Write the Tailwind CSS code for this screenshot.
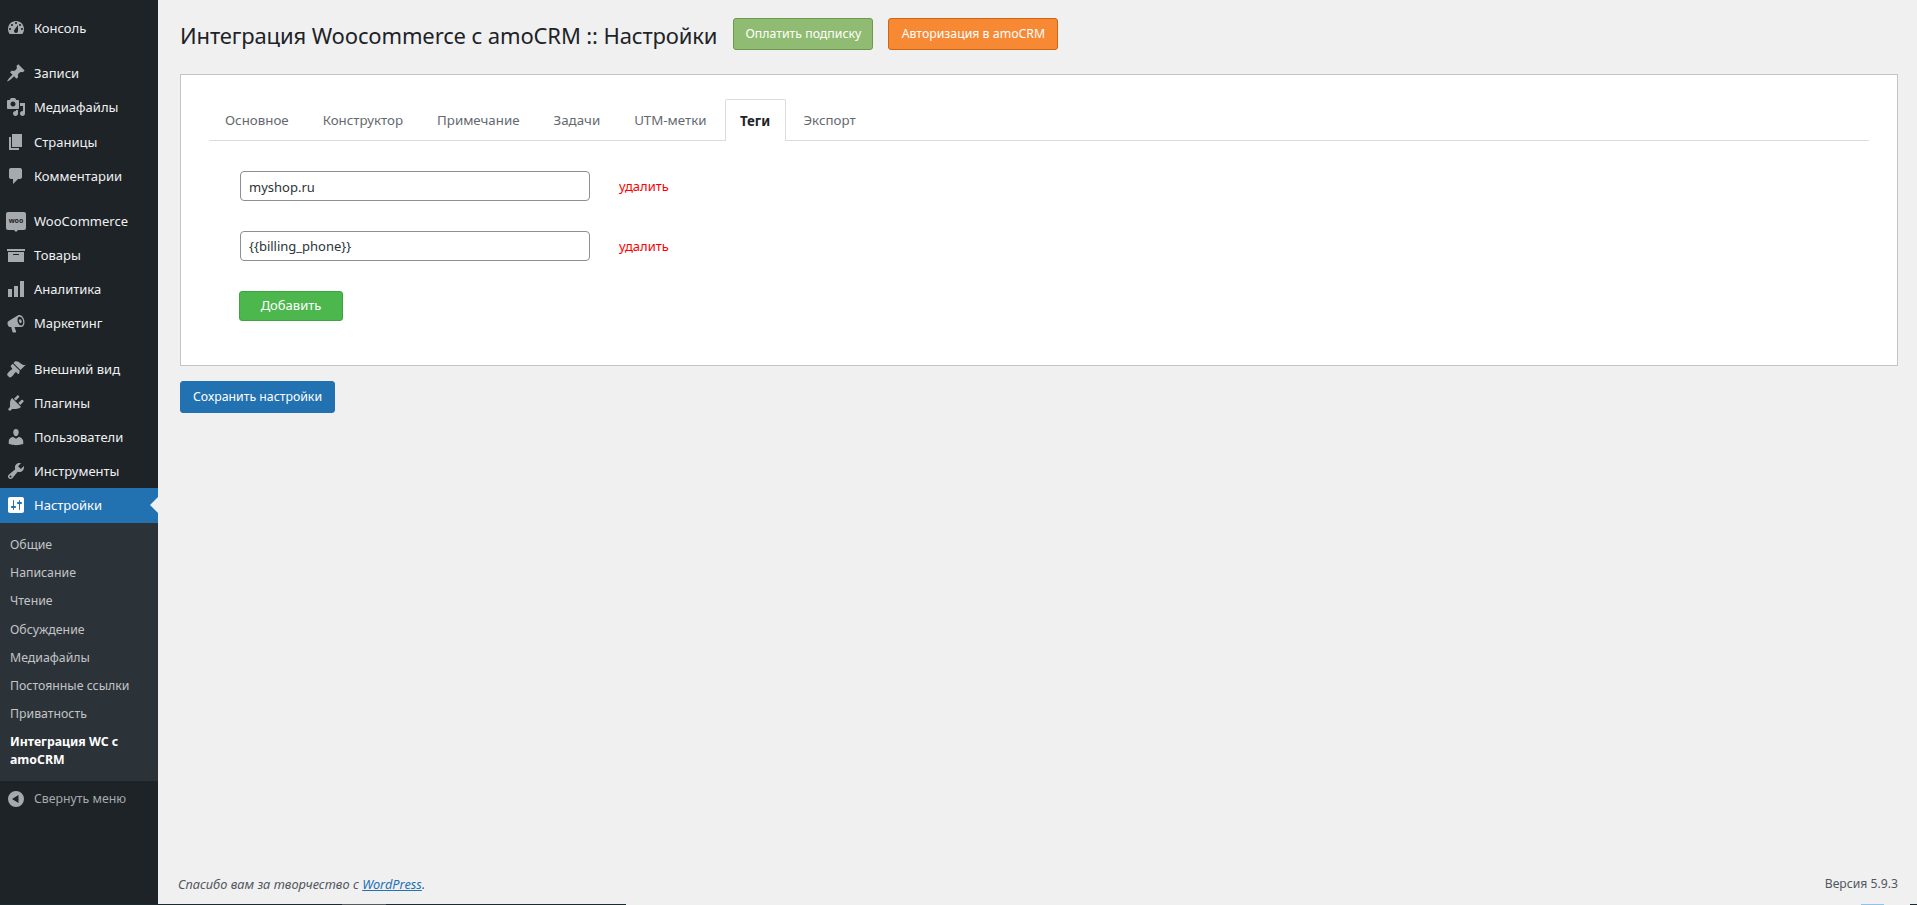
<!DOCTYPE html>
<html>
<head>
  <meta charset="UTF-8" />
  <title>Интеграция Woocommerce с amoCRM</title>
  <script src="https://cdn.jsdelivr.net/npm/@tailwindcss/browser@4"></script>
</head>
<body class="relative bg-[#f0f0f1] h-[905px] overflow-hidden flex font-['Noto_Sans',sans-serif] text-[13px] text-[#3c434a]">

  <!-- МЕНЮ -->
  <aside class="w-[158px] shrink-0 bg-[#1d2327] text-[#f0f0f1] pt-[11px] text-[13px] leading-[18.2px]">
    <a class="flex items-center h-[34.2px]"><svg class="w-5 h-5 ml-[6px] mr-[8px] fill-[#a7aaad]" viewBox="0 0 20 20"><path fill-rule="evenodd" d="M3.76 16h12.48c1.1-1.37 1.76-3.11 1.76-5 0-4.42-3.58-8-8-8s-8 3.58-8 8c0 1.89.66 3.63 1.76 5zM10 4c.55 0 1 .45 1 1s-.45 1-1 1-1-.45-1-1 .45-1 1-1zM6 6c.55 0 1 .45 1 1s-.45 1-1 1-1-.45-1-1 .45-1 1-1zm8 0c.55 0 1 .45 1 1s-.45 1-1 1-1-.45-1-1 .45-1 1-1zm-5.37 5.55L12 7v6c0 1.1-.9 2-2 2s-2-.9-2-2c0-.57.24-1.08.63-1.45zM4 10c.55 0 1 .45 1 1s-.45 1-1 1-1-.45-1-1 .45-1 1-1zm12 0c.55 0 1 .45 1 1s-.45 1-1 1-1-.45-1-1 .45-1 1-1z"/></svg>Консоль</a>

    <div class="h-[11px]"></div>
    <a class="flex items-center h-[34.2px]"><svg class="w-5 h-5 ml-[6px] mr-[8px] fill-[#a7aaad]" viewBox="0 0 20 20"><path d="M10.44 3.02l1.82-1.82 6.36 6.35-1.83 1.82c-1.05-.68-2.48-.57-3.41.36l-.75.75c-.92.93-1.04 2.35-.35 3.41l-1.83 1.82-2.41-2.41-2.8 2.79c-.42.42-3.38 2.71-3.8 2.29s1.86-3.39 2.28-3.81l2.79-2.79L4.1 9.36l1.83-1.82c1.05.69 2.48.57 3.4-.36l.75-.75c.93-.92 1.05-2.35.36-3.41z"/></svg>Записи</a>
    <a class="flex items-center h-[34.2px]"><svg class="w-5 h-5 ml-[6px] mr-[8px] fill-[#a7aaad]" viewBox="0 0 20 20"><path fill-rule="evenodd" d="M13 11V4c0-.55-.45-1-1-1h-1.67L9 1H5L3.67 3H2c-.55 0-1 .45-1 1v7c0 .55.45 1 1 1h10c.55 0 1-.45 1-1zM7 4.5c1.38 0 2.5 1.12 2.5 2.5S8.38 9.5 7 9.5 4.5 8.38 4.5 7 5.62 4.5 7 4.5zM14 6h5v10.5c0 1.38-1.12 2.5-2.5 2.5S14 17.88 14 16.5s1.12-2.5 2.5-2.5c.17 0 .34.02.5.05V9h-3V6zm-4 8.05V13h2v3.5c0 1.38-1.12 2.5-2.5 2.5S7 17.88 7 16.5 8.12 14 9.5 14c.17 0 .34.02.5.05z"/></svg>Медиафайлы</a>
    <a class="flex items-center h-[34.2px]"><svg class="w-5 h-5 ml-[6px] mr-[8px] fill-[#a7aaad]" viewBox="0 0 20 20"><path d="M6 15V2h10v13H6zm-1 1h8v2H3V5h2v11z"/></svg>Страницы</a>
    <a class="flex items-center h-[34.2px]"><svg class="w-5 h-5 ml-[6px] mr-[8px] fill-[#a7aaad]" viewBox="0 0 20 20"><path d="M5 2h9c1.1 0 2 .9 2 2v7c0 1.1-.9 2-2 2h-2l-5 5v-5H5c-1.1 0-2-.9-2-2V4c0-1.1.9-2 2-2z"/></svg>Комментарии</a>

    <div class="h-[11px]"></div>
    <a class="flex items-center h-[34.2px]"><span class="relative w-5 h-[18px] ml-[6px] mr-[8px] rounded-[2px] bg-[#a7aaad] text-[#1d2327] text-[7px] leading-[18px] text-center font-bold">woo<span class="absolute left-[8px] top-[18px] border-x-[2px] border-t-[2px] border-x-transparent border-t-[#a7aaad]"></span></span>WooCommerce</a>
    <a class="flex items-center h-[34.2px]"><svg class="w-5 h-5 ml-[6px] mr-[8px] fill-[#a7aaad]" viewBox="0 0 20 20"><path fill-rule="evenodd" d="M19 4v2H1V4h18zM2 7h16v10H2V7zm11 3V9H7v1h6z"/></svg>Товары</a>
    <a class="flex items-center h-[34.2px]"><svg class="w-5 h-5 ml-[6px] mr-[8px] fill-[#a7aaad]" viewBox="0 0 20 20"><path d="M18 18V2h-4v16h4zm-6 0V7H8v11h4zm-6 0v-8H2v8h4z"/></svg>Аналитика</a>
    <a class="flex items-center h-[34.2px]"><svg class="w-5 h-5 ml-[6px] mr-[8px] fill-[#a7aaad]" viewBox="0 0 20 20"><path fill-rule="evenodd" d="M18.15 5.94c.46 1.62.38 3.22-.02 4.48-.42 1.28-1.26 2.18-2.3 2.48-.6.2-1.2.1-1.8.1H8.5l1.6 4.6c.1.4-.2.8-.6.8H7.2c-.4 0-.6-.2-.7-.5L5.2 13H4.25c-.5.06-1.08-.18-1.54-.62s-.88-1.08-1.06-1.88c-.24-.8-.2-1.56-.02-2.2.18-.62.58-1.08 1.06-1.3l9-5.4c.3-.2.6-.4 1-.5 1.04-.3 2.24.1 3.22 1 .98.88 1.8 2.24 2.26 3.86zM15.5 11.4c1.5-.4 2.1-2.6 1.5-5-.6-2.4-2.3-4-3.8-3.6-1.5.4-2.1 2.6-1.5 5 .6 2.4 2.3 4 3.8 3.6zM14.9 9.1c.7-.2 1-1.2.7-2.3-.3-1.1-1.1-1.8-1.8-1.6-.7.2-1 1.2-.7 2.3.3 1.1 1.1 1.8 1.8 1.6z"/></svg>Маркетинг</a>

    <div class="h-[11px]"></div>
    <a class="flex items-center h-[34.2px]"><svg class="w-5 h-5 ml-[6px] mr-[8px] fill-[#a7aaad]" viewBox="0 0 20 20"><path d="M14.48 11.06L7.41 3.99l1.5-1.5c.5-.56 2.3-.47 3.51.32 1.21.8 1.43 1.28 2.91 2.1 1.18.64 2.45 1.26 4.45.85zm-.71.71L6.7 4.7 4.93 6.47c-.39.39-.39 1.02 0 1.41l1.06 1.06c.39.39.39 1.03 0 1.42-.6.6-1.43 1.11-2.21 1.69-.35.26-.7.53-1.01.84-1.34 1.34-2.1 2.7-1.4 3.4l1.9 1.9c.7.7 2.06-.06 3.4-1.4.31-.31.58-.66.84-1.01.58-.78 1.09-1.61 1.69-2.21.39-.39 1.02-.39 1.41 0l1.06 1.06c.39.39 1.02.39 1.41 0z"/></svg>Внешний вид</a>
    <a class="flex items-center h-[34.2px]"><svg class="w-5 h-5 ml-[6px] mr-[8px] fill-[#a7aaad]" viewBox="0 0 20 20"><path d="M13.11 4.36L9.87 7.6 8 5.73l3.24-3.24c.35-.34 1.05-.2 1.56.32.52.51.66 1.21.31 1.55zm-8 1.77l.91-1.12 9.01 9.01-1.19.84c-.71.71-2.63 1.16-3.82 1.16H6.14L4.9 17.26c-.59.59-1.54.59-2.12 0-.59-.58-.59-1.53 0-2.12l1.24-1.24v-3.88c0-1.13.4-3.19 1.09-3.89zm7.26 3.97l3.24-3.24c.34-.35 1.04-.21 1.55.31.52.51.66 1.21.31 1.55l-3.24 3.25z"/></svg>Плагины</a>
    <a class="flex items-center h-[34.2px]"><svg class="w-5 h-5 ml-[6px] mr-[8px] fill-[#a7aaad]" viewBox="0 0 20 20"><path d="M10 9.25c-2.27 0-2.73-3.44-2.73-3.44C7 4.02 7.82 2 9.97 2c2.16 0 2.98 2.02 2.71 3.81 0 0-.41 3.44-2.68 3.44zm0 2.57L12.72 10c2.39 0 4.52 2.33 4.52 4.53v2.49s-3.65 1.13-7.24 1.13c-3.65 0-7.24-1.13-7.24-1.13v-2.49c0-2.25 1.94-4.48 4.47-4.48z"/></svg>Пользователи</a>
    <a class="flex items-center h-[34.2px]"><svg class="w-5 h-5 ml-[6px] mr-[8px] fill-[#a7aaad]" viewBox="0 0 20 20"><path fill-rule="evenodd" d="M16.68 9.77c-1.34 1.34-3.3 1.67-4.95.99l-5.41 6.52c-.99.99-2.59.99-3.58 0s-.99-2.59 0-3.57l6.52-5.42c-.68-1.65-.35-3.61.99-4.95 1.28-1.28 3.12-1.62 4.72-1.06l-2.89 2.89 2.82 2.82 2.86-2.87c.53 1.58.18 3.39-1.08 4.65zM3.81 16.21c.4.39 1.04.39 1.43 0 .4-.4.4-1.04 0-1.43-.39-.4-1.03-.4-1.43 0-.39.39-.39 1.03 0 1.43z"/></svg>Инструменты</a>

    <a class="relative flex items-center h-[35px] pb-[1px] bg-[#2271b1] text-white"><svg class="w-5 h-5 ml-[6px] mr-[8px] fill-white" viewBox="0 0 20 20"><path fill-rule="evenodd" d="M18 16V4c0-1.1-.9-2-2-2H4c-1.1 0-2 .9-2 2v12c0 1.1.9 2 2 2h12c1.1 0 2-.9 2-2zM8 11h1c.55 0 1 .45 1 1s-.45 1-1 1H8v1.5c0 .28-.22.5-.5.5s-.5-.22-.5-.5V13H6c-.55 0-1-.45-1-1s.45-1 1-1h1V5.5c0-.28.22-.5.5-.5s.5.22.5.5V11zm5-2h-1c-.55 0-1-.45-1-1s.45-1 1-1h1V5.5c0-.28.22-.5.5-.5s.5.22.5.5V7h1c.55 0 1 .45 1 1s-.45 1-1 1h-1v5.5c0 .28-.22.5-.5.5s-.5-.22-.5-.5V9z"/></svg>Настройки
      <span class="absolute right-0 top-[9px] border-y-[8px] border-r-[8px] border-y-transparent border-r-[#f0f0f1]"></span>
    </a>

    <!-- ПОДМЕНЮ -->
    <div class="bg-[#2c3338] h-[258px] pt-[7.5px] text-[#c3c4c7] text-[12.3px] leading-[18.2px]">
      <a class="block h-[28.2px] px-[10px] py-[5px]">Общие</a>
      <a class="block h-[28.2px] px-[10px] py-[5px]">Написание</a>
      <a class="block h-[28.2px] px-[10px] py-[5px]">Чтение</a>
      <a class="block h-[28.2px] px-[10px] py-[5px]">Обсуждение</a>
      <a class="block h-[28.2px] px-[10px] py-[5px]">Медиафайлы</a>
      <a class="block h-[28.2px] px-[10px] py-[5px]">Постоянные ссылки</a>
      <a class="block h-[28.2px] px-[10px] py-[5px]">Приватность</a>
      <a class="block px-[10px] py-[5px] font-bold text-white">Интеграция WC с amoCRM</a>
    </div>

    <a class="flex items-center h-[34px] pt-[1px] text-[12.3px] text-[#a7aaad]"><svg class="w-5 h-5 ml-[6px] mr-[8px] fill-[#a7aaad]" viewBox="0 0 20 20"><path fill-rule="evenodd" d="M10 2a8 8 0 100 16 8 8 0 000-16zm2.5 4v8L6 10z"/></svg>Свернуть меню</a>
  </aside>

  <!-- КОНТЕНТ -->
  <main class="flex-1 min-w-0 flex flex-col pl-[22px] pr-[19px]">
    <div class="flex items-start h-[74px] pt-[18px]">
      <h1 class="mt-[2px] text-[22px] tracking-[-0.13px] leading-[30px] text-[#1d2327]">Интеграция Woocommerce с amoCRM :: Настройки</h1>
      <button class="ml-4 h-[32px] w-[140px] rounded-[3px] bg-[#8fbc72] border border-[#6a9a4a] text-white text-[12.3px]">Оплатить подписку</button>
      <button class="ml-[15px] h-[32px] w-[170px] rounded-[3px] bg-[#f78935] border border-[#d2640f] text-white text-[12.3px]">Авторизация в amoCRM</button>
    </div>

    <section class="h-[292px] bg-white border border-[#c3c4c7] pt-[24px] pl-[28px] pr-[28px]">
      <div class="flex gap-[2px] h-[42px] border-b border-[#dcdcde] text-[#646970] text-[13.3px]">
        <a class="px-4 pt-[12px]">Основное</a>
        <a class="px-4 pt-[12px]">Конструктор</a>
        <a class="px-4 pt-[12px]">Примечание</a>
        <a class="px-4 pt-[12px]">Задачи</a>
        <a class="px-4 pt-[12px]">UTM-метки</a>
        <a class="h-[42px] w-[61px] text-center pt-[12px] bg-white border border-b-0 border-[#dcdcde] rounded-t-[2px] font-bold text-[#1d2327]">Теги</a>
        <a class="px-4 pt-[12px]">Экспорт</a>
      </div>

      <div class="pl-[30px] pt-[30px]">
        <div class="flex items-center h-[30px] ml-[1px]">
          <input value="myshop.ru" class="w-[350px] h-[30px] px-2 pt-[1px] border border-[#8c8f94] rounded-[4px] text-[#2c3338] text-[13px]" />
          <a class="ml-[29px] mt-[2px] text-[#ff0000]">удалить</a>
        </div>
        <div class="flex items-center h-[30px] mt-[30px] ml-[1px]">
          <input value="{{billing_phone}}" class="w-[350px] h-[30px] px-2 border border-[#8c8f94] rounded-[4px] text-[#2c3338] text-[13px]" />
          <a class="ml-[29px] mt-[2px] text-[#ff0000]">удалить</a>
        </div>
        <button class="mt-[30px] w-[104px] h-[30px] rounded-[3px] bg-[#4cb74d] border border-[#3fa341] text-white text-[13px]">Добавить</button>
      </div>
    </section>

    <button class="mt-[15px] self-start w-[155px] h-[32px] rounded-[3px] bg-[#2271b1] border border-[#2271b1] text-white text-[12.3px]">Сохранить настройки</button>

    <footer class="mt-auto h-[40px] flex justify-between items-start pt-[10px] -ml-[2px] text-[#50575e] leading-[18px]">
      <span class="italic text-[12.8px]">Спасибо вам за творчество с <a class="text-[#2271b1] underline">WordPress</a>.</span>
      <span class="text-[12.2px]">Версия 5.9.3</span>
    </footer>
  </main>

  <!-- полоска внизу кадра -->
  <div class="absolute left-0 right-0 bottom-0 h-[1px] flex">
    <div class="w-[342px] bg-[#1d2b30]"></div>
    <div class="w-[44px] bg-[#555a5c]"></div>
    <div class="w-[240px] bg-[#1d2b30]"></div>
    <div class="w-[1235px]"></div>
    <div class="w-[23px] bg-[#8fc4ea]"></div>
    <div class="w-[26px]"></div>
    <div class="w-[7px] bg-[#1d2b30]"></div>
  </div>

</body>
</html>
